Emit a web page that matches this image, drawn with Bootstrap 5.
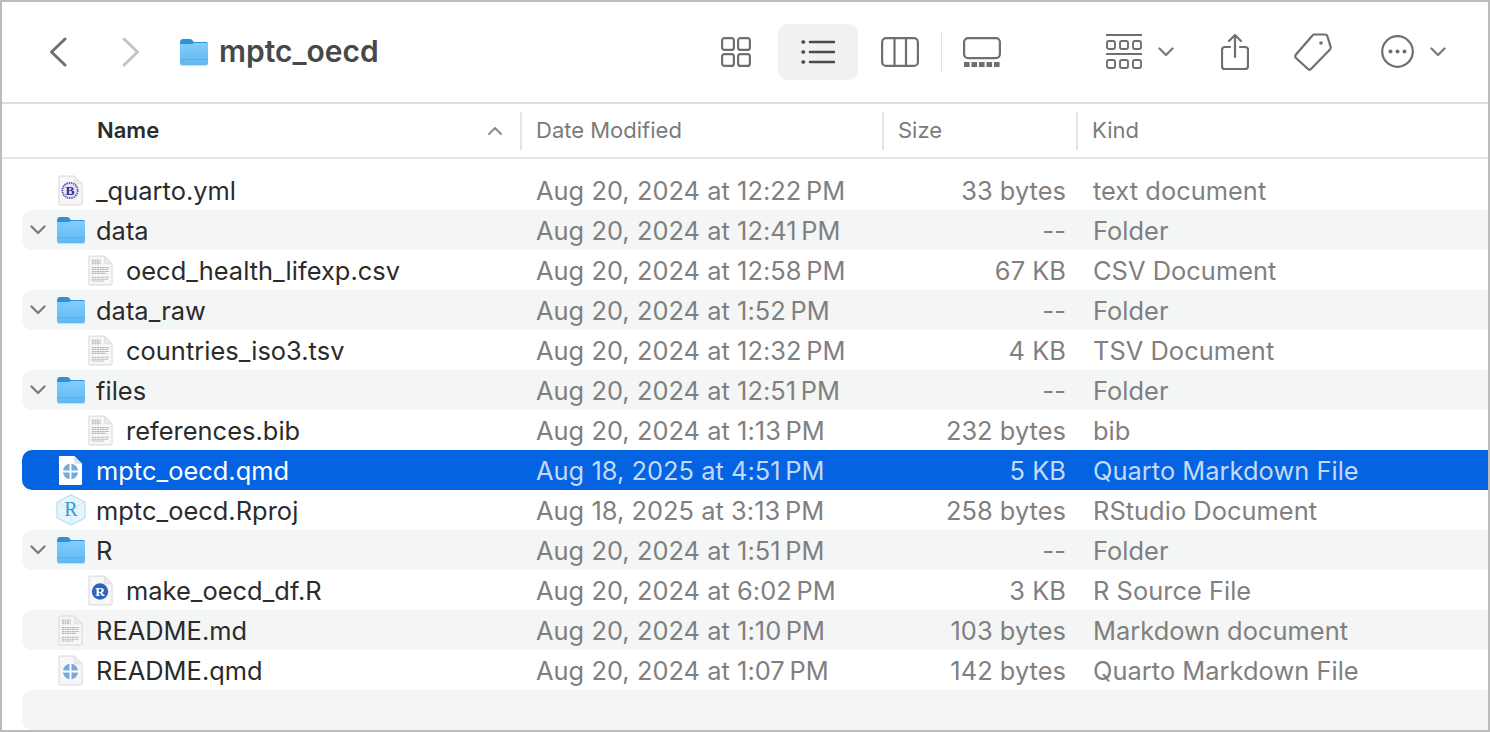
<!DOCTYPE html>
<html lang="en">
<head>
<meta charset="UTF-8">
<meta name="viewport" content="width=device-width, initial-scale=1.0">
<title>mptc_oecd</title>
<link rel="stylesheet" href="https://cdn.jsdelivr.net/npm/bootstrap@5.3.3/dist/css/bootstrap.min.css">
<style>
html, body { height: 100%; }
body { background: #fff; font-family: Inter, "Liberation Sans", sans-serif; color: #2b2b2b; overflow: hidden; }
.finder { height: 732px; border: 2px solid #bcbcbc; background: #fff; }

.tb { height: 103px; padding-bottom: 1px; border-bottom: 2px solid #dcdcdc; }
.tb svg { display: block; flex: none; }
.tb-left { width: 719px; padding-left: 46px; }
.fw-btn { margin-left: 53px; }
.tb-folder { margin-left: 38px; margin-right: 10px; }
.tb-title { font-size: 30px; font-weight: 600; color: #484848; }
.view-on { width: 80px; height: 56px; margin-left: 27px; background: #f1f1f1; border-radius: 10px; }
.ic-cols { margin-left: 23px; }
.tb-sep { width: 1px; height: 40px; margin-left: 22px; background: #e4e4e4; }
.ic-gallery { margin-left: 21px; }
.ic-group { margin-left: 105px; }
.ic-chev { margin-left: 16px; }
.ic-share { margin-left: 47px; }
.ic-tag { margin-left: 45px; }
.ic-more { margin-left: 49px; }

.hdr { height: 55px; border-bottom: 2px solid #e4e4e4; font-size: 22px; color: #7b7b7b; }
.hdr-name { width: 518px; padding-left: 95px; padding-right: 18px; font-weight: 600; color: #2b2b2b; }
.hdr-cell { height: 38px; border-left: 2px solid #e4e4e4; padding-left: 14px; }
.hdr-date { width: 362px; }
.hdr-size { width: 194px; }

.rows { padding: 11px 0 0 20px; }
.frow { height: 40px; padding-top: 3px; border-radius: 10px 0 0 10px; font-size: 25.4px; letter-spacing: .04px; white-space: nowrap; }
.frow:nth-child(even) { background: #f4f5f5; }
.frow.is-sel, .frow.is-sel:nth-child(even) { background: #0463e1; color: #fff; }
.is-sel .c-date, .is-sel .c-size, .is-sel .c-kind { color: #c3d9f9; }
.c-name { width: 514px; }
.lvl1 { padding-left: 30px; }
.twist { width: 26px; margin-top: -3px; padding-left: 8px; flex: none; }
.slot { width: 45px; margin-top: -3px; margin-right: 3px; flex: none; }
.c-date { width: 346px; color: #808080; }
.c-size { width: 184px; color: #808080; text-align: right; }
.c-kind { margin-left: 27px; color: #808080; }
</style>
</head>
<body>

<svg width="0" height="0" class="position-absolute">
  <defs>
    <linearGradient id="fold" x1="0" y1="0" x2="0" y2="1">
      <stop offset="0" stop-color="#82cdfb"/>
      <stop offset="1" stop-color="#5fb8f0"/>
    </linearGradient>
    <symbol id="folder" viewBox="0 0 30 28">
      <path d="M1 5Q1 1 4 1h7q2 0 3 2l1 1h12q2 0 2 2v6H1z" fill="#2a92dc"/>
      <path d="M1 7q0-1 1-1h10q2 0 3-1h13q1 0 1 2v18q0 2-2 2H3q-2 0-2-2z" fill="url(#fold)"/>
      <path d="M1 21h28v1H1z" fill="#4ea6e2" opacity=".6"/>
      <path d="M1 25q0 2 2 2h24q2 0 2-2v1q0 2-2 2H3q-2 0-2-2z" fill="#9a9a9a" opacity=".35"/>
    </symbol>
    <symbol id="page" viewBox="0 0 26 32">
      <path d="M2 1h15l8 8v21q0 1-1 1H2q-1 0-1-1V2q0-1 1-1z" fill="#f7f7f7" stroke="#d6d6d6"/>
      <path d="M17 1v7q0 1 1 1h7z" fill="#ececec" stroke="#d6d6d6" stroke-width=".6"/>
    </symbol>
    <symbol id="txt" viewBox="0 0 26 32">
      <use href="#page"/>
      <path d="M4 5h10M4 7h9M4 9h10M4 13h18M4 15h17M4 17h18M4 19h15M4 23h18M4 25h17M4 27h12" stroke="#b4b4b4" stroke-width="1.100" stroke-dasharray="2.500 .5 1.500 .5" fill="none"/>
    </symbol>
    <symbol id="bs" viewBox="0 0 26 32">
      <use href="#page"/>
      <circle cx="12.500" cy="16" r="8" fill="#e6e1f5" stroke="#5e50b8" stroke-width="1.800" stroke-dasharray="1.600 .8"/>
      <text x="12.500" y="21" text-anchor="middle" font-family="Liberation Serif, serif" font-size="14" font-weight="700" fill="#27348f">B</text>
    </symbol>
    <symbol id="qmd" viewBox="0 0 26 32">
      <use href="#page"/>
      <circle cx="13" cy="17" r="8" fill="#75aadb"/>
      <path d="M13 8v18M4 17h18" stroke="#fff" stroke-width="2"/>
    </symbol>
    <symbol id="rdoc" viewBox="0 0 26 32">
      <use href="#page"/>
      <circle cx="12.500" cy="17" r="8.500" fill="#2f63c0"/>
      <text x="12.500" y="22" text-anchor="middle" font-family="Liberation Serif, serif" font-size="14" font-weight="700" fill="#fff">R</text>
    </symbol>
    <symbol id="rproj" viewBox="0 0 32 32">
      <path d="M16 1l14 7v16l-14 7L2 24V8z" fill="#e6f4fb" stroke="#b7dff2" stroke-width="1.200"/>
      <path d="M2 8l14 7 14-7M16 15v16" fill="none" stroke="#cfeaf6" stroke-width="1"/>
      <text x="16" y="22" text-anchor="middle" font-family="Liberation Serif, serif" font-size="20" fill="#2f9bd8">R</text>
    </symbol>
    <symbol id="qmd-sel" viewBox="0 0 26 32">
      <path d="M2 1h15l8 8v21q0 1-1 1H2q-1 0-1-1V2q0-1 1-1z" fill="#fff"/>
      <path d="M17 1v7q0 1 1 1h7z" fill="#d5e3f6"/>
      <circle cx="13" cy="17" r="8" fill="#75aadb"/>
      <path d="M13 8v18M4 17h18" stroke="#fff" stroke-width="2"/>
    </symbol>
    <symbol id="twist" viewBox="0 0 16 10">
      <path d="M1.500 1.500L8 8l6.500-6.500" fill="none" stroke="#7d7d7d" stroke-width="2.400" stroke-linecap="round" stroke-linejoin="round"/>
    </symbol>
  </defs>
</svg>

<div class="finder d-flex flex-column">

  <!-- toolbar -->
  <div class="tb d-flex align-items-center">
    <div class="tb-left d-flex align-items-center">
      <svg width="20" height="30" viewBox="0 0 20 30"><path d="M17 2L3.500 15 17 28" fill="none" stroke="#6f6f6f" stroke-width="3" stroke-linecap="round" stroke-linejoin="round"/></svg>
      <svg class="fw-btn" width="20" height="30" viewBox="0 0 20 30"><path d="M3 2l13.500 13L3 28" fill="none" stroke="#c4c4c4" stroke-width="3" stroke-linecap="round" stroke-linejoin="round"/></svg>
      <svg class="tb-folder" width="30" height="28"><use href="#folder"/></svg>
      <span class="tb-title">mptc_oecd</span>
    </div>

    <svg width="30" height="30" viewBox="0 0 30 30" fill="none" stroke="#6f6f6f" stroke-width="2.200"><rect x="1.100" y="1.100" width="11.800" height="11.800" rx="2.500"/><rect x="17.100" y="1.100" width="11.800" height="11.800" rx="2.500"/><rect x="1.100" y="17.100" width="11.800" height="11.800" rx="2.500"/><rect x="17.100" y="17.100" width="11.800" height="11.800" rx="2.500"/></svg>
    <div class="view-on d-flex align-items-center justify-content-center">
      <svg width="34" height="26" viewBox="0 0 34 26" fill="none" stroke="#4a4a4a"><path d="M9 3h24M9 13h24M9 23h24" stroke-width="2.600" stroke-linecap="round"/><path d="M2 3h.5M2 13h.5M2 23h.5" stroke-width="3.600" stroke-linecap="round"/></svg>
    </div>
    <svg class="ic-cols" width="38" height="30" viewBox="0 0 38 30" fill="none" stroke="#6f6f6f" stroke-width="2.200"><rect x="1.100" y="1.100" width="35.800" height="27.800" rx="4"/><path d="M13.500 1v28M25 1v28"/></svg>
    <div class="tb-sep"></div>
    <svg class="ic-gallery" width="38" height="30" viewBox="0 0 38 30" fill="none"><rect x="1.100" y="1.100" width="35.800" height="20" rx="4" stroke="#6f6f6f" stroke-width="2.200"/><path d="M1 27.500h36" stroke="#6f6f6f" stroke-width="5" stroke-dasharray="5.600 1.900"/></svg>

    <svg class="ic-group" width="36" height="36" viewBox="0 0 36 36" fill="none" stroke="#6f6f6f"><path d="M0 1h36M0 20h36" stroke-width="2.200"/><g stroke-width="1.900"><rect x="1" y="7" width="8" height="8" rx="2"/><rect x="14" y="7" width="8" height="8" rx="2"/><rect x="27" y="7" width="8" height="8" rx="2"/><rect x="1" y="26" width="8" height="8" rx="2"/><rect x="14" y="26" width="8" height="8" rx="2"/><rect x="27" y="26" width="8" height="8" rx="2"/></g></svg>
    <svg class="ic-chev" width="16" height="10" viewBox="0 0 16 10"><use href="#twist"/></svg>
    <svg class="ic-share" width="28" height="38" viewBox="0 0 28 38" fill="none" stroke="#6f6f6f" stroke-width="2.200" stroke-linecap="round" stroke-linejoin="round"><path d="M9 14H4q-3 0-3 3v16q0 3 3 3h20q3 0 3-3V17q0-3-3-3h-5"/><path d="M14 24V2M8 8l6-6 6 6"/></svg>
    <svg class="ic-tag" width="38" height="38" viewBox="0 0 38 38" fill="none" stroke="#6f6f6f" stroke-width="2.200"><path d="M20 1.500h11q2 0 2.500 2l3 10q.5 2-1 3.500L17 36q-1.500 1.500-3 0L2 25q-1.500-1.500 0-3.500L18 3q1-1.500 2-1.500z"/><circle cx="27" cy="10" r="1.800" fill="#6f6f6f" stroke="none"/></svg>
    <svg class="ic-more" width="33" height="33" viewBox="0 0 33 33"><circle cx="16.500" cy="16.500" r="15.300" fill="none" stroke="#6f6f6f" stroke-width="2.200"/><circle cx="9.500" cy="16.500" r="2" fill="#6f6f6f"/><circle cx="16.500" cy="16.500" r="2" fill="#6f6f6f"/><circle cx="23.500" cy="16.500" r="2" fill="#6f6f6f"/></svg>
    <svg class="ic-chev" width="16" height="10" viewBox="0 0 16 10"><use href="#twist"/></svg>
  </div>

  <!-- column headers -->
  <div class="hdr d-flex align-items-center">
    <div class="hdr-name d-flex align-items-center justify-content-between">
      <span>Name</span>
      <svg width="14" height="8" viewBox="0 0 14 8"><path d="M1 7l6-6 6 6" fill="none" stroke="#8a8a8a" stroke-width="1.800" stroke-linecap="round" stroke-linejoin="round"/></svg>
    </div>
    <div class="hdr-cell hdr-date d-flex align-items-center">Date Modified</div>
    <div class="hdr-cell hdr-size d-flex align-items-center">Size</div>
    <div class="hdr-cell d-flex align-items-center">Kind</div>
  </div>

  <!-- file list -->
  <div class="rows flex-grow-1">
    <div class="frow d-flex align-items-center">
      <div class="c-name d-flex align-items-center"><div class="twist"></div><div class="slot d-flex justify-content-center"><svg width="25" height="31"><use href="#bs"/></svg></div>_quarto.yml</div>
      <div class="c-date">Aug 20, 2024 at 12:22&#8239;PM</div><div class="c-size">33 bytes</div><div class="c-kind">text document</div>
    </div>
    <div class="frow d-flex align-items-center">
      <div class="c-name d-flex align-items-center"><div class="twist"><svg class="d-block" width="16" height="10"><use href="#twist"/></svg></div><div class="slot d-flex justify-content-center"><svg width="30" height="28"><use href="#folder"/></svg></div>data</div>
      <div class="c-date">Aug 20, 2024 at 12:41&#8239;PM</div><div class="c-size">--</div><div class="c-kind">Folder</div>
    </div>
    <div class="frow d-flex align-items-center">
      <div class="c-name lvl1 d-flex align-items-center"><div class="twist"></div><div class="slot d-flex justify-content-center"><svg width="25" height="31"><use href="#txt"/></svg></div>oecd_health_lifexp.csv</div>
      <div class="c-date">Aug 20, 2024 at 12:58&#8239;PM</div><div class="c-size">67 KB</div><div class="c-kind">CSV Document</div>
    </div>
    <div class="frow d-flex align-items-center">
      <div class="c-name d-flex align-items-center"><div class="twist"><svg class="d-block" width="16" height="10"><use href="#twist"/></svg></div><div class="slot d-flex justify-content-center"><svg width="30" height="28"><use href="#folder"/></svg></div>data_raw</div>
      <div class="c-date">Aug 20, 2024 at 1:52&#8239;PM</div><div class="c-size">--</div><div class="c-kind">Folder</div>
    </div>
    <div class="frow d-flex align-items-center">
      <div class="c-name lvl1 d-flex align-items-center"><div class="twist"></div><div class="slot d-flex justify-content-center"><svg width="25" height="31"><use href="#txt"/></svg></div>countries_iso3.tsv</div>
      <div class="c-date">Aug 20, 2024 at 12:32&#8239;PM</div><div class="c-size">4 KB</div><div class="c-kind">TSV Document</div>
    </div>
    <div class="frow d-flex align-items-center">
      <div class="c-name d-flex align-items-center"><div class="twist"><svg class="d-block" width="16" height="10"><use href="#twist"/></svg></div><div class="slot d-flex justify-content-center"><svg width="30" height="28"><use href="#folder"/></svg></div>files</div>
      <div class="c-date">Aug 20, 2024 at 12:51&#8239;PM</div><div class="c-size">--</div><div class="c-kind">Folder</div>
    </div>
    <div class="frow d-flex align-items-center">
      <div class="c-name lvl1 d-flex align-items-center"><div class="twist"></div><div class="slot d-flex justify-content-center"><svg width="25" height="31"><use href="#txt"/></svg></div>references.bib</div>
      <div class="c-date">Aug 20, 2024 at 1:13&#8239;PM</div><div class="c-size">232 bytes</div><div class="c-kind">bib</div>
    </div>
    <div class="frow is-sel d-flex align-items-center">
      <div class="c-name d-flex align-items-center"><div class="twist"></div><div class="slot d-flex justify-content-center"><svg width="25" height="31"><use href="#qmd-sel"/></svg></div>mptc_oecd.qmd</div>
      <div class="c-date">Aug 18, 2025 at 4:51&#8239;PM</div><div class="c-size">5 KB</div><div class="c-kind">Quarto Markdown File</div>
    </div>
    <div class="frow d-flex align-items-center">
      <div class="c-name d-flex align-items-center"><div class="twist"></div><div class="slot d-flex justify-content-center"><svg width="32" height="32"><use href="#rproj"/></svg></div>mptc_oecd.Rproj</div>
      <div class="c-date">Aug 18, 2025 at 3:13&#8239;PM</div><div class="c-size">258 bytes</div><div class="c-kind">RStudio Document</div>
    </div>
    <div class="frow d-flex align-items-center">
      <div class="c-name d-flex align-items-center"><div class="twist"><svg class="d-block" width="16" height="10"><use href="#twist"/></svg></div><div class="slot d-flex justify-content-center"><svg width="30" height="28"><use href="#folder"/></svg></div>R</div>
      <div class="c-date">Aug 20, 2024 at 1:51&#8239;PM</div><div class="c-size">--</div><div class="c-kind">Folder</div>
    </div>
    <div class="frow d-flex align-items-center">
      <div class="c-name lvl1 d-flex align-items-center"><div class="twist"></div><div class="slot d-flex justify-content-center"><svg width="25" height="31"><use href="#rdoc"/></svg></div>make_oecd_df.R</div>
      <div class="c-date">Aug 20, 2024 at 6:02&#8239;PM</div><div class="c-size">3 KB</div><div class="c-kind">R Source File</div>
    </div>
    <div class="frow d-flex align-items-center">
      <div class="c-name d-flex align-items-center"><div class="twist"></div><div class="slot d-flex justify-content-center"><svg width="25" height="31"><use href="#txt"/></svg></div>README.md</div>
      <div class="c-date">Aug 20, 2024 at 1:10&#8239;PM</div><div class="c-size">103 bytes</div><div class="c-kind">Markdown document</div>
    </div>
    <div class="frow d-flex align-items-center">
      <div class="c-name d-flex align-items-center"><div class="twist"></div><div class="slot d-flex justify-content-center"><svg width="25" height="31"><use href="#qmd"/></svg></div>README.qmd</div>
      <div class="c-date">Aug 20, 2024 at 1:07&#8239;PM</div><div class="c-size">142 bytes</div><div class="c-kind">Quarto Markdown File</div>
    </div>
    <div class="frow"></div>
  </div>
</div>

<script src="https://cdn.jsdelivr.net/npm/bootstrap@5.3.3/dist/js/bootstrap.bundle.min.js"></script>
</body>
</html>
